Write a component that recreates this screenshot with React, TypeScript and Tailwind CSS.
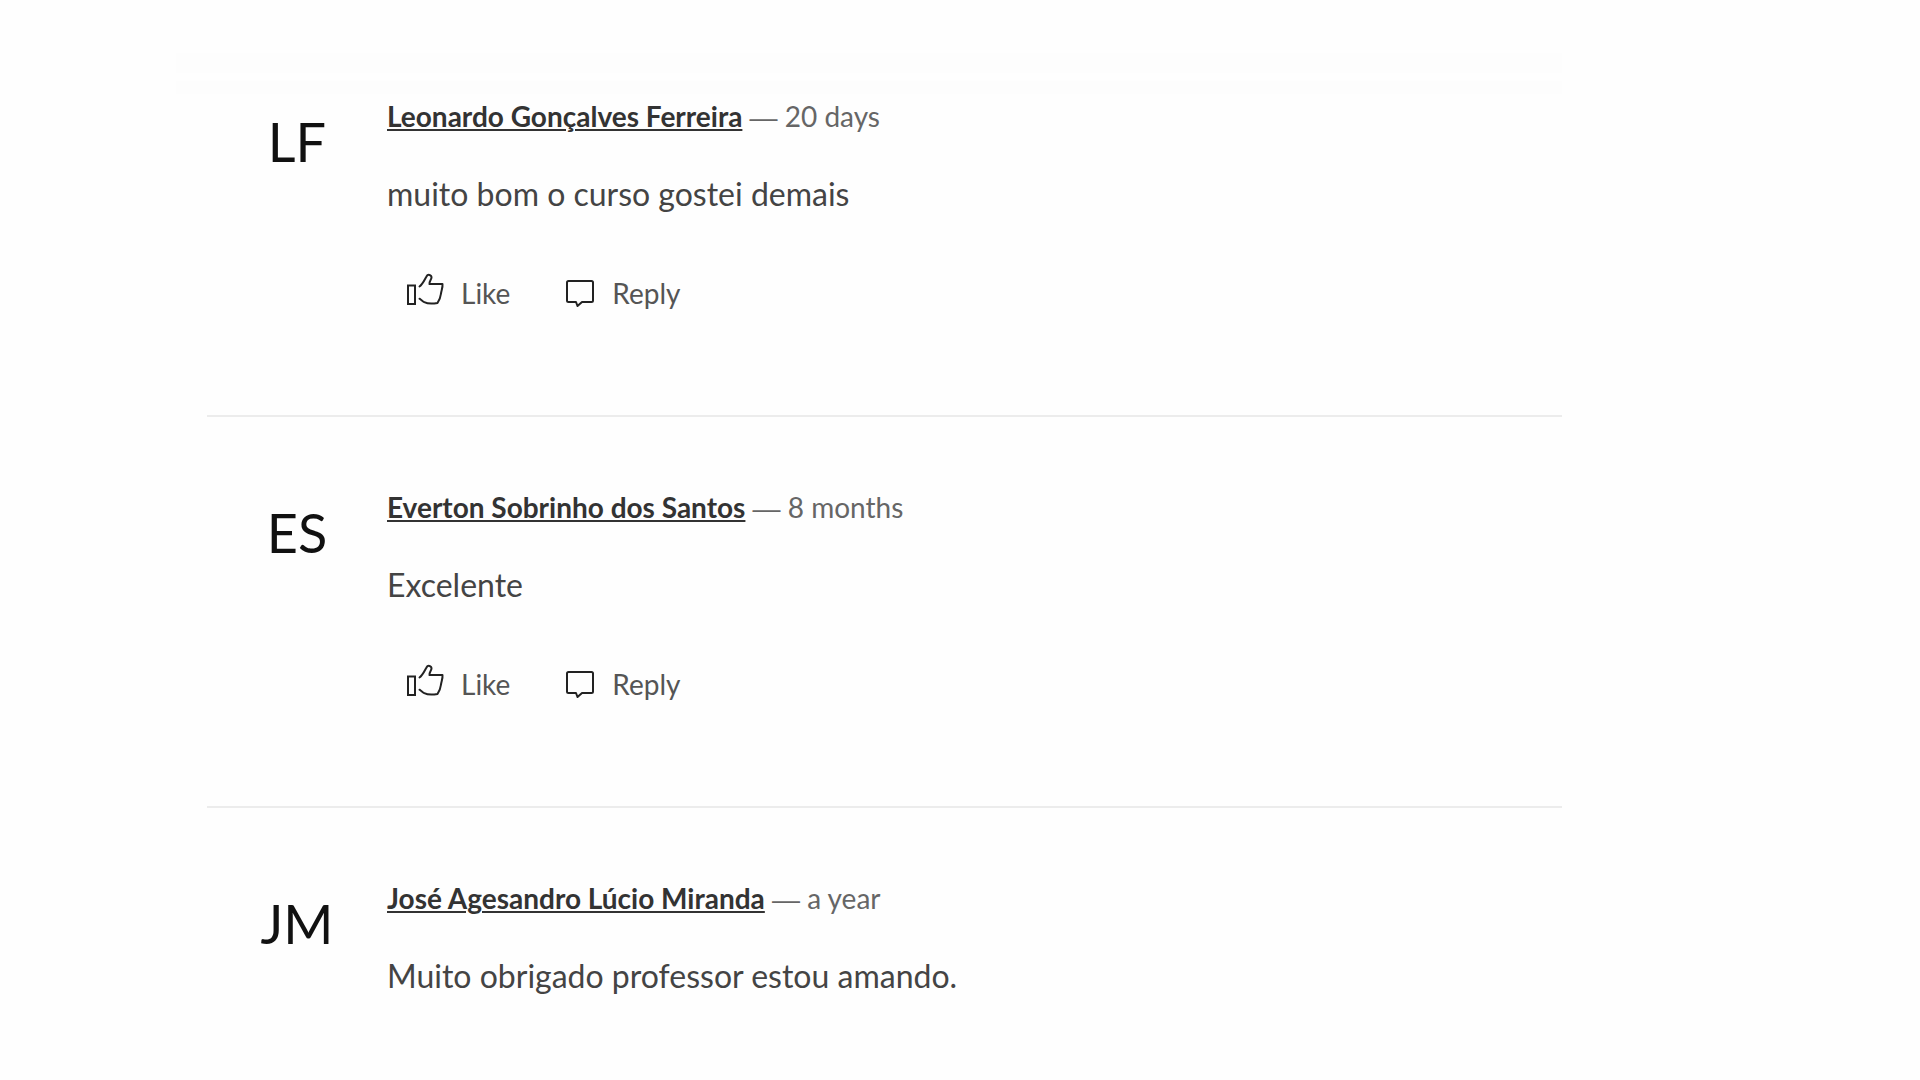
/**
 * Lista de comentários do curso, com as ações de curtir e responder.
 */

interface Comment {
  id: number;
  initials: string;
  author: string;
  time: string;
  text: string;
  hasActions: boolean;
}

const comments: Comment[] = [
  { id: 1, initials: "LF", author: "Leonardo Gonçalves Ferreira", time: "20 days", text: "muito bom o curso gostei demais", hasActions: true },
  { id: 2, initials: "ES", author: "Everton Sobrinho dos Santos", time: "8 months", text: "Excelente", hasActions: true },
  { id: 3, initials: "JM", author: "José Agesandro Lúcio Miranda", time: "a year", text: "Muito obrigado professor estou amando.", hasActions: false },
];

function LikeIcon() {
  return (
    <svg className="h-10 w-10" viewBox="0 0 40 40" fill="none" stroke="#222" strokeWidth="2" strokeLinejoin="round" strokeLinecap="round" aria-hidden="true">
      <path d="M1 12.500h7v18.500H1z" strokeLinejoin="miter" />
      <path d="M12.500 13.500C15.500 11.500 17.500 7 19.500 3.500c1.200-2.600 5-2 5 1 0 2-2.500 3.500-2 6.500H35.500c.4 3.500-1 6-1.600 10-.4 3.500-1.400 6-3.400 9-5.500 1-10 .8-13.200-.8-1.800-1-3.200-2.500-4.800-3.500" />
    </svg>
  );
}

function ReplyIcon() {
  return (
    <svg className="h-10 w-7" viewBox="0 0 28 40" fill="none" stroke="#222" strokeWidth="2" strokeLinejoin="round" aria-hidden="true">
      <path d="M2.500 8h23q1.500 0 1.500 1.500v18q0 1.500-1.500 1.500H16l-4.500 4-1.500-4H2.500q-1.500 0-1.500-1.500V9.500q0-1.500 1.500-1.500z" />
    </svg>
  );
}

function CommentItem({ comment }: { comment: Comment }) {
  return (
    <article className="flex border-t-2 border-[#ececec] pt-[70px] pb-[102px] first:border-t-0 first:pt-[2px]">
      <div className="flex h-[90px] w-[180px] shrink-0 items-center justify-center text-[54px] text-[#111]">
        {comment.initials}
      </div>
      <div className="min-w-0 flex-1">
        <p className="text-[28px] leading-10 text-[#666]">
          <a href="#" className="font-bold text-[#333] underline decoration-2 underline-offset-2">{comment.author}</a>
          {" "}
          <span className="font-['Liberation_Sans',sans-serif] leading-none">—</span>
          {" "}
          {comment.time}
        </p>
        <p className="mt-[38px] text-[32px] leading-10 text-[#444]">{comment.text}</p>
        {comment.hasActions && (
          <div className="mt-[59px] flex h-10 items-center gap-14 pl-5 text-[28px] text-[#555]">
            <button type="button" className="flex items-center gap-[14px]">
              <LikeIcon />
              Like
            </button>
            <button type="button" className="flex items-center gap-[18px]">
              <ReplyIcon />
              Reply
            </button>
          </div>
        )}
      </div>
    </article>
  );
}

export default function App() {
  return (
    <div className="min-h-screen bg-[#fefefe] font-['Lato','Noto_Sans',sans-serif]">
      <main className="mr-[358px] ml-44 pt-[53px]">
        <div className="h-5 bg-[#fdfdfd]" />
        <div className="mt-2 h-[13px] bg-[#fdfdfd]" />
        <section className="pl-[31px]">
          {comments.map((comment) => (
            <CommentItem key={comment.id} comment={comment} />
          ))}
        </section>
      </main>
    </div>
  );
}
